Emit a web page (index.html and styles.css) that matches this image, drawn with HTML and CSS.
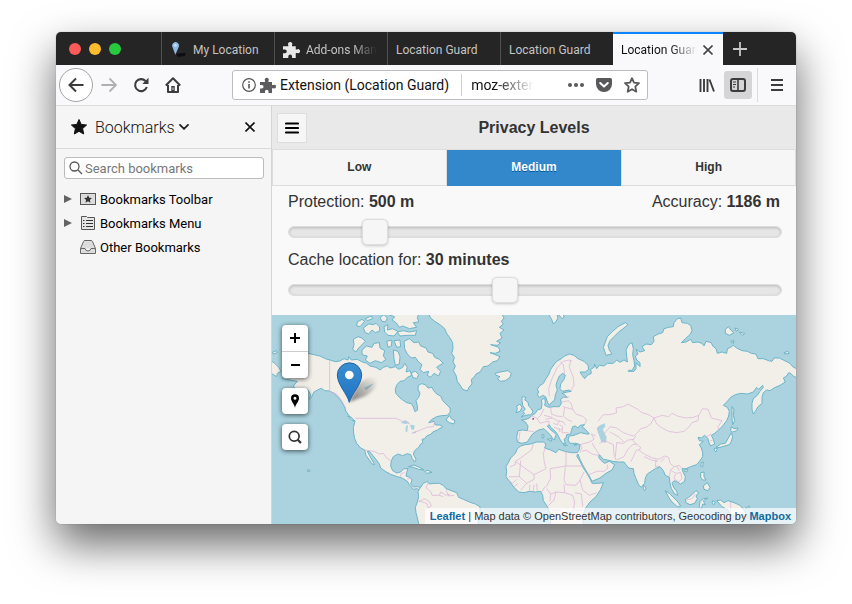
FILE: index.html
```html
<!DOCTYPE html>
<html lang="en">
<head>
    <meta charset="UTF-8">
    <meta name="viewport" content="width=device-width, initial-scale=1.0">
    <title>Location Guard</title>
    <link rel="stylesheet" href="styles.css">
</head>
<body>

<!-- shared shapes -->
<svg class="defs" width="0" height="0" aria-hidden="true">
    <symbol id="puzzle" viewBox="0 0 16 16">
        <path d="M5 5V3.800A2 2 0 1 1 8.500 3.800V5H12V8H13.200A1.900 1.900 0 1 1 13.200 11.200H12V16H8.500V14.500A1.700 1.700 0 0 0 5 14.500V16H0V11.500H1.800A1.700 1.700 0 0 0 1.800 8H0V5Z" fill="currentColor"/>
    </symbol>
    <symbol id="star" viewBox="0 0 16 16">
        <path d="M8 0.500L10.200 5.400L15.600 6L11.600 9.600L12.700 15L8 12.300L3.300 15L4.400 9.600L0.400 6L5.800 5.400Z" fill="currentColor" stroke="currentColor" stroke-linejoin="round"/>
    </symbol>
    <symbol id="magnifier" viewBox="0 0 14 14">
        <circle cx="5.500" cy="5.500" r="4.500" fill="none" stroke="currentColor" stroke-width="1.300"/>
        <path d="M9 9L13 13" stroke="currentColor" stroke-width="1.300"/>
    </symbol>
</svg>

<div class="window">

    <header class="tab-bar">
        <div class="lights">
            <span class="light red"></span>
            <span class="light yellow"></span>
            <span class="light green"></span>
        </div>
        <button class="tab">
            <svg class="tab-icon" viewBox="0 0 16 16"><path d="M6 12L15 11L14 14L7 15Z" fill="#0c0e12"/><path d="M5 13L2.500 6A3.200 3.200 0 1 1 8 6Z" fill="#8fb8e4"/><circle cx="5" cy="4" r="1.500" fill="#c3dbf3"/></svg>
            <span class="tab-label">My Location</span>
        </button>
        <button class="tab">
            <svg class="tab-icon light-icon"><use href="#puzzle"/></svg>
            <span class="tab-label fade">Add-ons Manager</span>
        </button>
        <button class="tab"><span class="tab-label">Location Guard</span></button>
        <button class="tab"><span class="tab-label">Location Guard</span></button>
        <button class="tab active">
            <span class="tab-label fade">Location Guard</span>
            <svg class="tab-close" viewBox="0 0 10 10"><path d="M0.500 0.500L9.500 9.500M9.500 0.500L0.500 9.500" stroke="#444" stroke-width="1.600"/></svg>
        </button>
        <button class="new-tab" aria-label="New tab">
            <svg width="14" height="14" viewBox="0 0 14 14"><path d="M7 0V14M0 7H14" stroke="#c8c8c8" stroke-width="1.800"/></svg>
        </button>
    </header>

    <nav class="toolbar">
        <button class="back" aria-label="Back">
            <svg width="16" height="16" viewBox="0 0 16 16"><path d="M15.500 8H1.500M8 1.500L1.500 8L8 14.500" fill="none" stroke="#3c3c3c" stroke-width="2"/></svg>
        </button>
        <button class="tool" aria-label="Forward">
            <svg width="16" height="16" viewBox="0 0 16 16"><path d="M0.500 8H14.500M8.500 1.500L15 8L8.500 14.500" fill="none" stroke="#b0b0b2" stroke-width="1.800"/></svg>
        </button>
        <button class="tool" aria-label="Reload">
            <svg width="16" height="16" viewBox="0 0 16 16"><path d="M12.500 4A6 6 0 1 0 13.800 10" fill="none" stroke="#3c3c3c" stroke-width="2.100"/><path d="M15.500 0.800V7H9.300Z" fill="#3c3c3c"/></svg>
        </button>
        <button class="tool" aria-label="Home">
            <svg width="16" height="16" viewBox="0 0 16 16"><path d="M0.800 8.500L8 1.300L15.200 8.500M3 8V15H13V8" fill="none" stroke="#3c3c3c" stroke-width="2" stroke-linejoin="round"/><path d="M6.300 15V9H9.700V15" fill="#3c3c3c"/><path d="M8 10.500V13" stroke="#ddd"/></svg>
        </button>

        <div class="url-bar">
            <button class="identity">
                <svg class="info" width="14" height="14" viewBox="0 0 14 14"><circle cx="7" cy="7" r="6.300" fill="none" stroke="#555" stroke-width="1.200"/><path d="M7 6V10.500M7 3.200V4.800" stroke="#555" stroke-width="1.600"/></svg>
                <svg class="ext" width="16" height="16"><use href="#puzzle"/></svg>
                <span>Extension (Location Guard)</span>
            </button>
            <input class="url" type="text" value="moz-exten" aria-label="Address">
            <button class="url-button" aria-label="Page actions">
                <svg width="16" height="16" viewBox="0 0 16 16" fill="#58585a"><circle cx="2" cy="8" r="2"/><circle cx="8" cy="8" r="2"/><circle cx="14" cy="8" r="2"/></svg>
            </button>
            <button class="url-button" aria-label="Save to Pocket">
                <svg width="16" height="16" viewBox="0 0 16 16"><path d="M1.500 1H14.500Q16 1 16 2.500V7A8 8 0 0 1 0 7V2.500Q0 1 1.500 1Z" fill="#58585a"/><path d="M4.200 6L8 9.600L11.800 6" fill="none" stroke="#fff" stroke-width="2" stroke-linecap="round" stroke-linejoin="round"/></svg>
            </button>
            <button class="url-button" aria-label="Bookmark this page">
                <svg width="16" height="16" viewBox="0 0 16 16"><path d="M8 1.200L10 5.700L15 6.200L11.300 9.600L12.300 14.700L8 12.200L3.700 14.700L4.700 9.600L1 6.200L6 5.700Z" fill="none" stroke="#58585a" stroke-width="1.800" stroke-linejoin="round"/></svg>
            </button>
        </div>

        <button class="tool" aria-label="Library">
            <svg width="16" height="16" viewBox="0 0 16 16"><path d="M1.500 2V15M5 2V15M8.500 2V15M10.500 2.500L15 14.500" stroke="#3c3c3c" stroke-width="1.900" fill="none"/></svg>
        </button>
        <button class="tool pressed" aria-label="Sidebars">
            <svg width="16" height="14" viewBox="0 0 16 14"><rect x="1" y="1" width="14" height="12" rx="2" fill="none" stroke="#3c3c3c" stroke-width="2"/><path d="M8 1V13" stroke="#3c3c3c" stroke-width="1.600"/><path d="M3 4H6M3 6.500H6M3 9H5" stroke="#3c3c3c"/></svg>
        </button>
        <button class="tool app-menu" aria-label="Menu">
            <svg width="12" height="12" viewBox="0 0 12 12"><path d="M0 1H12M0 6H12M0 11H12" stroke="#3c3c3c" stroke-width="1.800"/></svg>
        </button>
    </nav>

    <div class="content">

        <aside class="sidebar">
            <div class="sidebar-header">
                <button class="sidebar-title">
                    <svg width="16" height="16"><use href="#star"/></svg>
                    <span>Bookmarks</span>
                    <svg width="10" height="6" viewBox="0 0 10 6"><path d="M1 0.800L5 4.800L9 0.800" fill="none" stroke="#222" stroke-width="1.800" stroke-linecap="round"/></svg>
                </button>
                <button class="sidebar-close" aria-label="Close sidebar">
                    <svg width="10" height="10" viewBox="0 0 10 10"><path d="M0.500 0.500L9.500 9.500M9.500 0.500L0.500 9.500" stroke="#111" stroke-width="1.600"/></svg>
                </button>
            </div>
            <label class="search">
                <svg width="14" height="14"><use href="#magnifier"/></svg>
                <input type="search" placeholder="Search bookmarks" aria-label="Search bookmarks">
            </label>
            <ul class="tree">
                <li>
                    <svg class="twisty" viewBox="0 0 8 8"><path d="M0 0L8 4L0 8Z" fill="#636363"/></svg>
                    <svg class="folder" viewBox="0 0 16 14"><rect x="0.500" y="1.500" width="15" height="11" fill="#ddd" stroke="#555"/><path d="M8 3L9.200 5.700L12 6L9.900 7.900L10.500 10.700L8 9.300L5.500 10.700L6.100 7.900L4 6L6.800 5.700Z" fill="#333"/></svg>
                    <a href="#toolbar">Bookmarks Toolbar</a>
                </li>
                <li>
                    <svg class="twisty" viewBox="0 0 8 8"><path d="M0 0L8 4L0 8Z" fill="#636363"/></svg>
                    <svg class="folder" viewBox="0 0 16 14"><path d="M1.500 0.500H6.500L7.500 1.500H14.500V13.500H1.500Z" fill="#e6e6e6" stroke="#555"/><path d="M3 4.500H4.500M3 7.500H4.500M3 10.500H4.500M6 4.500H13M6 7.500H13M6 10.500H13" stroke="#333"/></svg>
                    <a href="#menu">Bookmarks Menu</a>
                </li>
                <li>
                    <span class="twisty"></span>
                    <svg class="folder" viewBox="0 0 16 14"><path d="M0.500 8.500L3.500 1.500Q3.800 0.500 5 0.500H11Q12.200 0.500 12.500 1.500L15.500 8.500V13.500H0.500Z" fill="#ddd" stroke="#666"/><path d="M0.500 8.500H5Q5.500 11 8 11Q10.500 11 11 8.500H15.500" fill="#f5f5f5" stroke="#666"/></svg>
                    <a href="#other">Other Bookmarks</a>
                </li>
            </ul>
        </aside>

        <main class="page">
            <div class="page-header">
                <button class="page-menu" aria-label="Open menu">
                    <svg width="14" height="12" viewBox="0 0 14 12"><path d="M1 1.500H13M1 6H13M1 10.500H13" stroke="#000" stroke-width="2.200" stroke-linecap="round"/></svg>
                </button>
                <h1>Privacy Levels</h1>
            </div>

            <div class="levels">
                <button>Low</button>
                <button class="selected">Medium</button>
                <button>High</button>
            </div>

            <div class="settings">
                <div class="setting-row">
                    <label for="protection">Protection: <b>500 m</b></label>
                    <span>Accuracy: <b>1186 m</b></span>
                </div>
                <input id="protection" type="range" min="0" max="1000" value="156">
                <div class="setting-row">
                    <label for="cache">Cache location for: <b>30 minutes</b></label>
                </div>
                <input id="cache" type="range" min="0" max="1000" value="435">
            </div>

            <div class="map">
                <svg class="world" viewBox="6 15 1572 627" preserveAspectRatio="xMinYMin slice" aria-hidden="true">
                    <defs>
                        <linearGradient id="pin" x1="0" y1="0" x2="0" y2="1">
                            <stop offset="0" stop-color="#3a8fd2"/>
                            <stop offset="1" stop-color="#2072c0"/>
                        </linearGradient>
                        <linearGradient id="pin-shadow" x1="0" y1="1" x2="1" y2="0">
                            <stop offset="0" stop-color="#000" stop-opacity="0.500"/>
                            <stop offset="1" stop-color="#000" stop-opacity="0"/>
                        </linearGradient>
                        <filter id="soft"><feGaussianBlur stdDeviation="5"/></filter>
                    </defs>

                    <g class="land">
                        <!-- North and Central America -->
                        <path d="M60 130L85 120L114 130L132 134L150 138L166 146L180 150L196 155L210 153L222 146L234 150L236 140L244 150L262 148L275 155L290 160L300 168L318 172L330 180L340 172L352 168L360 174L376 170L386 178L398 172L404 160L412 172L408 186L420 182L425 196L412 202L402 212L390 214L381 224L376 236L377 249L388 262L398 270L410 278L424 281L430 291L435 305L443 300L442 288L438 272L446 262L450 250L444 238L445 226L455 221L466 224L474 234L486 232L490 240L500 252L512 258L518 272L528 282L540 294L541 306L532 316L515 317L500 320L486 328L476 338L492 334L496 345L510 345L518 350L502 360L488 366L484 372L470 378L464 386L456 388L459 398L452 402L446 412L434 422L430 432L438 448L434 456L427 446L422 434L412 431L398 437L384 432L370 440L364 452L362 468L368 482L380 489L392 486L400 477L414 475L410 488L408 498L420 502L426 510L422 522L430 531L442 530L452 532L452 540L440 536L430 538L418 524L412 514L398 505L382 500L362 493L346 484L332 474L328 462L318 448L308 436L298 424L292 424L298 436L306 450L314 464L306 462L298 450L288 436L284 420L272 414L260 400L254 386L251 370L250 352L254 338L248 326L236 316L228 304L222 288L214 274L206 264L192 250L178 243L164 242L154 235L142 240L132 246L124 262L118 268L122 254L114 240L96 236L76 238L70 228L82 214L60 210L36 206L50 190L36 172Z"/>
                        <!-- Chukotka at the date line -->
                        <path d="M0 150L14 160L26 172L34 184L22 190L20 200L0 188Z"/>
                        <path d="M8 126L20 122L22 128L10 132Z"/>
                        <!-- Vancouver, Newfoundland, Antilles, Hawaii -->
                        <path d="M233 318L242 322L256 334L244 330Z"/>
                        <path d="M528 330L538 316L544 326L555 332L552 342L538 338Z"/>
                        <path d="M416 470L432 465L448 472L462 480L446 478L430 472Z"/>
                        <path d="M464 484L474 481L486 487L470 490Z"/>
                        <path d="M112 480L120 480L119 485L113 484Z"/>
                        <!-- Arctic archipelago -->
                        <path d="M250 88L264 80L276 84L286 94L276 104L266 114L258 126L248 118L252 104Z"/>
                        <path d="M276 120L290 108L306 112L312 100L328 98L330 114L344 122L340 138L348 148L334 158L316 152L300 160L286 150L292 138L276 134Z"/>
                        <path d="M350 94L366 90L364 108L354 112Z"/>
                        <path d="M370 120L384 124L390 140L388 162L376 166L372 146Z"/>
                        <path d="M372 92L390 90L392 110L380 112Z"/>
                        <path d="M402 94L418 86L432 98L446 96L452 108L468 114L474 126L488 130L494 142L508 148L520 160L508 166L500 172L512 184L506 198L492 190L482 202L472 196L476 184L460 188L450 178L456 164L444 154L436 142L424 144L412 132L404 116Z"/>
                        <path d="M424 188L436 184L446 194L440 206L428 202Z"/>
                        <path d="M280 54L296 42L310 44L318 40L328 50L330 62L316 68L306 60L296 72L286 68Z"/>
                        <path d="M262 36L276 28L284 34L270 50L260 48Z"/>
                        <path d="M286 26L304 18L308 26L292 32Z"/>
                        <path d="M342 50L354 44L352 60L368 56L384 64L372 78L354 76L344 66Z"/>
                        <path d="M382 66L400 62L418 66L440 62L436 76L412 76L390 78Z"/>
                        <path d="M330 22L342 14L352 24L346 36L336 34Z"/>
                        <path d="M364 0H452L442 22L446 36L430 38L440 52L418 56L398 48L388 52L378 38L366 30L374 20L360 16Z"/>
                        <!-- Greenland -->
                        <path d="M470 0L482 24L494 34L510 44L524 56L530 70L540 84L548 98L549 116L545 130L553 142L549 156L556 168L550 182L558 196L562 214L572 228L578 238L592 243L598 230L606 222L604 208L612 202L618 192L630 186L640 170L654 168L668 156L682 152L690 140L676 134L660 128L676 130L690 124L686 112L662 104L682 106L692 98L680 94L696 84L690 70L702 60L688 52L700 42L694 34L702 24L690 0Z"/>
                        <!-- Iceland, British Isles -->
                        <path d="M676 190L690 186L702 184L714 182L724 190L720 202L706 212L692 214L682 206L690 200L678 196Z"/>
                        <path d="M756 260L768 262L764 270L774 276L776 288L784 296L789 306L782 314L766 316L754 321L764 310L758 304L766 298L758 286L756 272Z"/>
                        <path d="M740 288L750 282L756 292L750 304L738 308L742 298Z"/>
                        <!-- Svalbard, Novaya Zemlya, Severnaya Zemlya -->
                        <path d="M836 14L844 26L850 42L858 34L864 24L860 10Z"/>
                        <path d="M866 14L876 26L882 22L880 10Z"/>
                        <path d="M1000 112L1006 96L1012 80L1028 64L1044 50L1066 38L1074 44L1062 54L1046 66L1032 80L1020 92L1014 106L1018 120L1026 132L1008 136Z"/>
                        <path d="M1366 58L1376 50L1382 60L1392 68L1378 76L1366 70Z"/>
                        <path d="M1394 54L1406 58L1400 64ZM1408 66L1424 70L1418 76ZM1382 94L1392 92L1390 100Z"/>
                        <path d="M1542 128L1554 124L1558 130L1544 132Z"/>
                        <!-- Europe, Asia and Africa -->
                        <path d="M802 238L808 228L820 220L828 206L836 194L842 178L852 164L860 154L874 146L884 138L898 132L912 136L924 146L942 154L954 166L956 178L946 186L930 186L936 196L944 206L952 196L964 190L962 178L972 172L974 162L980 176L988 166L1002 168L1012 160L1030 160L1040 150L1050 157L1062 150L1072 156L1070 138L1068 120L1076 104L1086 98L1090 116L1088 134L1092 152L1094 168L1086 182L1078 180L1074 184L1092 184L1098 176L1098 158L1110 170L1110 158L1100 150L1096 138L1104 132L1098 118L1110 126L1124 122L1116 110L1128 102L1144 104L1152 94L1150 80L1164 72L1178 68L1182 56L1196 52L1210 50L1212 38L1222 26L1232 24L1236 38L1252 40L1262 46L1266 62L1260 74L1246 86L1234 98L1248 96L1262 88L1268 98L1284 96L1296 100L1302 108L1308 94L1324 98L1328 108L1338 116L1342 130L1356 126L1370 130L1372 116L1382 112L1390 106L1400 114L1416 122L1432 124L1444 130L1458 132L1464 146L1480 146L1496 152L1506 154L1512 144L1528 144L1548 154L1560 160L1568 170L1590 182V206L1572 200L1564 192L1556 188L1550 198L1540 204L1546 216L1530 226L1512 234L1500 242L1490 240L1480 248L1476 262L1476 280L1464 290L1456 304L1450 312L1446 298L1446 280L1450 266L1462 256L1470 244L1480 232L1478 226L1466 238L1460 232L1450 246L1432 252L1412 250L1396 254L1382 262L1372 274L1360 286L1372 292L1378 304L1376 318L1370 332L1358 348L1346 360L1334 370L1324 376L1330 388L1334 402L1322 408L1316 396L1314 386L1304 376L1294 384L1284 382L1288 392L1300 394L1288 404L1294 414L1298 428L1298 440L1290 452L1280 464L1262 470L1248 476L1236 476L1240 488L1246 500L1244 514L1232 522L1222 516L1212 512L1206 520L1212 534L1220 544L1223 556L1214 552L1204 536L1200 520L1198 502L1186 496L1180 482L1170 470L1156 476L1144 484L1132 492L1126 504L1124 520L1114 532L1106 524L1098 506L1092 490L1090 476L1076 474L1068 464L1062 456L1046 456L1028 454L1012 450L1000 448L988 434L986 442L994 452L1004 460L1018 454L1034 464L1026 480L1008 490L990 504L966 514L958 498L948 482L938 464L930 448L924 432L920 438L930 454L940 474L952 492L962 510L966 520L984 520L1000 518L992 538L978 560L960 576L948 592L938 620L942 670H850L842 640L840 610L832 590L820 572L818 556L812 544L796 546L778 544L762 548L746 546L732 532L720 516L708 500L710 484L708 470L716 456L722 444L736 430L742 416L752 408L766 404L782 402L800 396L820 396L828 402L824 414L842 420L858 428L866 418L884 424L904 428L922 428L928 418L930 404L918 400L900 400L894 390L898 378L912 376L932 368L950 372L958 372L946 358L936 350L944 344L930 346L924 354L916 348L908 350L904 362L902 372L890 374L888 384L882 388L886 400L878 400L870 388L864 376L856 364L842 352L838 344L832 348L840 358L850 366L860 374L856 378L854 390L848 386L842 376L832 366L822 356L806 360L796 366L786 374L778 386L772 396L756 400L742 396L740 382L744 362L758 360L772 362L774 348L766 336L754 330L768 328L778 324L786 316L796 310L802 300L814 296L816 282L814 270L824 264L826 276L824 286L836 292L852 290L868 290L874 280L872 268L880 262L892 262L884 254L876 250L892 246L904 244L896 240L878 244L870 236L872 222L882 208L886 196L878 190L868 198L862 212L858 226L862 240L856 254L854 270L844 278L838 286L832 276L828 262L820 256L808 262L802 254L806 246Z"/>
                        <!-- Mediterranean islands -->
                        <path d="M832 388L846 386L844 394ZM816 374L822 374L821 384L816 384ZM880 404L892 406L884 408ZM912 404L922 402L916 408Z"/>
                        <!-- Sakhalin and Japan -->
                        <path d="M1386 290L1392 300L1390 316L1394 332L1388 344L1386 326Z"/>
                        <path d="M1384 350L1392 356L1404 354L1400 362L1388 366L1382 362Z"/>
                        <path d="M1384 368L1388 380L1384 394L1378 404L1364 408L1350 412L1338 412L1352 402L1366 400L1374 386Z"/>
                        <path d="M1334 414L1342 416L1338 426L1332 420Z"/>
                        <!-- South-east Asia -->
                        <path d="M1294 458L1300 456L1298 470L1292 468ZM1246 478L1254 478L1250 486L1244 484ZM1120 524L1128 534L1124 542L1120 536Z"/>
                        <path d="M1292 488L1302 486L1302 500L1308 510L1298 510L1292 502ZM1300 528L1312 518L1320 532L1314 542L1302 538Z"/>
                        <path d="M1186 542L1198 550L1212 564L1224 576L1232 588L1222 590L1206 576L1196 562Z"/>
                        <path d="M1246 568L1256 562L1268 552L1278 542L1286 548L1278 558L1282 566L1274 580L1260 584L1248 578Z"/>
                        <path d="M1290 574L1300 566L1314 564L1300 572L1306 584L1298 582L1294 598L1288 590Z"/>
                        <path d="M1328 572L1336 576L1332 584L1326 580ZM1224 596L1250 598L1262 604L1240 604Z"/>
                        <path d="M1340 572L1352 570L1362 578L1374 572L1392 578L1410 586L1422 600L1436 622L1416 616L1398 620L1380 612L1374 600L1356 590Z"/>
                        <path d="M1426 594L1438 588L1436 596Z"/>
                        <!-- South America -->
                        <path d="M452 532L460 520L472 514L478 522L492 520L508 520L520 526L528 536L544 542L560 548L566 562L580 568L598 576L616 582L630 590L630 610L620 660H452L446 640L438 608L436 592L442 576L446 560L444 544Z"/>
                    </g>

                    <!-- lakes -->
                    <g class="lake">
                        <path d="M990 346L1004 340L1006 350L998 358L1004 370L1010 382L1008 398L994 396L990 384L984 368L980 354Z"/>
                        <path d="M392 338L406 330L418 338L406 342ZM408 348L414 344L412 366L406 364ZM420 344L434 346L432 360L424 358ZM424 370L440 362L436 370Z"/>
                        <path d="M282 234L300 224L312 220L300 232L288 240Z"/>
                    </g>

                    <!-- borders -->
                    <g class="borders">
                        <path d="M179 150V244L200 252L214 270L228 296M256 325H378L394 332L420 342M426 370L452 360L470 352L490 350L494 336M284 420L312 424L328 432L340 430L350 444L362 452M390 502L394 490L404 488M412 508L424 504"/>
                        <path d="M474 518L468 534L482 544L486 556L508 556L512 546L528 556L540 552M508 556L520 560M446 576L462 566L478 574L484 588L466 600M528 540L536 558L552 556M446 572L470 580L476 596"/>
                        <path d="M838 258L836 236L846 206L862 172L880 154L898 150L906 154M884 192L880 164L870 154M902 150L898 172L910 202L912 226L902 242"/>
                        <path d="M822 296L812 316L802 326L810 340L822 336L838 334L836 342M782 316L802 326M846 322L822 316M826 328L848 324L862 332L880 336L886 346M842 292L844 312L860 318L878 320M884 292L880 318L894 330L906 334M878 290L908 298L918 312L940 320L950 330L944 342M876 276L896 272L904 282L908 298M880 262L898 260M850 340L862 344L868 332M852 352L866 356L870 366M868 344L878 350L876 368L896 368M866 356L876 360M772 362L794 366M750 364L746 396"/>
                        <path d="M790 402L784 420L752 444L736 454L736 464L720 470M736 454L792 494L828 476L822 452L820 430L826 414M888 424V468H940M888 468L840 476L842 504L830 528L822 534M752 452L748 500L716 500M748 500L770 520L792 508V494M770 520L752 540M780 524L778 544M792 524L790 544M800 520L802 544M886 470L882 510L888 524L918 526L930 510L942 486M822 534L816 546M830 536L842 552L858 546L884 548L882 524M858 546L852 570L832 590M884 548L908 556L914 576L910 600M930 510L938 540L958 556L980 548M914 548L934 552L938 590M842 552L840 574M846 600L870 602L884 620L906 610L910 600L940 600M716 512L728 520L740 508M730 532L744 520"/>
                        <path d="M930 428L936 412L930 404L958 396L972 388L964 372L978 378M936 424L948 420L966 432L986 436M966 398L976 416L988 434M950 496L982 484L1002 484M1002 484L1014 474L1012 464M988 400L1004 392L1030 404L1032 434L1038 450"/>
                        <path d="M984 334L1000 314L1020 314L1040 308L1038 294L1060 290L1074 282L1100 296L1116 308L1136 314L1152 324L1142 342L1128 352L1112 356L1104 366L1092 378L1076 374L1060 368L1040 354L1020 350L1004 370M1152 324L1176 316L1196 320L1206 310L1222 318L1248 324L1270 322L1286 316L1284 332L1266 338L1256 352L1242 364L1220 368L1196 364L1176 354L1160 342ZM1286 316L1298 296L1314 298L1324 324L1356 332L1344 350L1346 360M1310 380L1324 372M1318 394L1328 390M1040 450L1062 440L1072 420L1088 404L1100 402M1038 398L1060 400L1074 390L1092 388M1040 400L1036 440M1020 366L1048 382L1062 396M1098 378L1088 390L1096 400L1112 412L1108 422L1126 434L1148 444L1166 448L1184 438L1196 442L1200 460L1212 470L1228 466L1236 476M1082 456L1090 440L1098 422L1108 418M1122 440L1144 450L1164 454M1158 450L1156 470L1168 468M1172 456L1184 444M1198 500L1202 480L1212 470M1204 482L1218 490L1232 488L1236 506L1226 516L1212 506L1216 492M1220 468L1228 482M1250 570L1266 566L1276 552M1382 576V612"/>
                    </g>
                    <rect x="787" y="324" width="5" height="5" fill="#b04b8a"/>

                    <!-- location marker -->
                    <path d="M238 276L262 226Q290 196 318 206Q326 234 286 258Z" fill="url(#pin-shadow)" filter="url(#soft)"/>
                    <path d="M238 277C232 252 202 224 202 195A36.500 36.500 0 0 1 275 195C275 224 244 252 238 277Z" fill="url(#pin)" stroke="#2262a3" stroke-width="3"/>
                    <circle cx="238" cy="195" r="13" fill="#fff"/>
                </svg>

                <div class="map-controls">
                    <div class="control-group">
                        <button aria-label="Zoom in"><svg width="12" height="12" viewBox="0 0 12 12"><path d="M6 1V11M1 6H11" stroke="#000" stroke-width="2"/></svg></button>
                        <button aria-label="Zoom out"><svg width="12" height="12" viewBox="0 0 12 12"><path d="M2 6H11" stroke="#000" stroke-width="2"/></svg></button>
                    </div>
                    <div class="control-group">
                        <button aria-label="Go to my location"><svg width="10" height="14" viewBox="0 0 10 14"><path d="M5 14C4.500 10 1 7.500 1 4.200A4 4 0 0 1 9 4.200C9 7.500 5.500 10 5 14ZM5 2.700A1.500 1.500 0 1 0 5 5.700A1.500 1.500 0 1 0 5 2.700Z" fill="#000" fill-rule="evenodd"/></svg></button>
                    </div>
                    <div class="control-group">
                        <button aria-label="Search the map"><svg width="14" height="14" viewBox="0 0 14 14"><circle cx="6.200" cy="6.200" r="4.900" fill="none" stroke="#333" stroke-width="1.700"/><path d="M9.500 9.500L13 13" stroke="#333" stroke-width="2.200"/></svg></button>
                    </div>
                </div>

                <div class="attribution"><a href="#leaflet">Leaflet</a> | Map data © OpenStreetMap contributors, Geocoding by <a href="#mapbox">Mapbox</a></div>
            </div>
        </main>

    </div>
</div>

</body>
</html>
```
FILE: styles.css
```css
* {
    box-sizing: border-box;
}

body {
    margin: 0;
    min-height: 100vh;
    padding: 32px 56px 80px;
    display: flex;
    background: #fff;
    font-family: Roboto, "Liberation Sans", sans-serif;
    font-size: 13px;
    color: #111;
}

button {
    margin: 0;
    padding: 0;
    border: none;
    background: none;
    font: inherit;
    color: inherit;
    display: flex;
    align-items: center;
    justify-content: center;
}

svg {
    display: block;
    flex: none;
}

.defs {
    position: absolute;
}

.window {
    flex: 1;
    min-width: 0;
    display: flex;
    flex-direction: column;
    border-radius: 5px;
    overflow: hidden;
    background: #f9f9fb;
    box-shadow: 0 0 1px rgba(0, 0, 0, 0.5), 0 20px 44px rgba(0, 0, 0, 0.6);
}

/* --- tabs --- */
.tab-bar {
    display: flex;
    height: 33px;
    background: #252525;
    color: #c4c4c4;
}

.lights {
    width: 105px;
    padding-left: 13px;
    display: flex;
    align-items: center;
    gap: 8px;
}

.light {
    width: 12px;
    height: 12px;
    border-radius: 50%;
}

.red { background: #fc5b57; }
.yellow { background: #fdbc2e; }
.green { background: #27c93f; }

.tab {
    flex: 0 1 113px;
    min-width: 0;
    padding: 2px 10px 0 8px;
    gap: 6px;
    justify-content: flex-start;
    border-left: 1px solid #505050;
    font-size: 12px;
}

.tab-icon {
    width: 17px;
    height: 17px;
}

.light-icon {
    color: #e8e8e8;
}

.tab-label {
    flex: 1;
    min-width: 0;
    overflow: hidden;
    white-space: nowrap;
    text-align: left;
}

.fade {
    -webkit-mask-image: linear-gradient(to right, #000 65%, transparent);
    mask-image: linear-gradient(to right, #000 65%, transparent);
}

.tab.active {
    flex-basis: 110px;
    padding-top: 0;
    border-left: none;
    border-top: 2px solid #0a84ff;
    background: #f9f9fb;
    color: #111;
}

.tab-close {
    width: 10px;
    height: 10px;
}

.new-tab {
    width: 34px;
}

/* --- toolbar --- */
.toolbar {
    display: flex;
    align-items: center;
    height: 41px;
    padding: 0 1px 0 3px;
    background: #f9f9fb;
    border-bottom: 1px solid #dcdcdc;
}

.back {
    width: 34px;
    height: 34px;
    border: 1px solid #a5a5a5;
    border-radius: 50%;
    background: #fff;
}

.tool {
    width: 32px;
    height: 28px;
}

.pressed {
    width: 28px;
    margin: 0 5px 0 1px;
    border-radius: 3px;
    background: #d5d5d7;
}

.app-menu {
    width: 38px;
    height: 34px;
    border-left: 1px solid #dcdcdc;
}

.url-bar {
    flex: 1;
    min-width: 0;
    height: 30px;
    margin: 0 43px;
    padding: 0 1px 0 9px;
    display: flex;
    align-items: center;
    border: 1px solid #bdbdbf;
    border-radius: 3px;
    background: #fff;
}

.identity {
    height: 22px;
    padding-right: 12px;
    gap: 4px;
    border-right: 1px solid #d0d0d0;
    font-size: 14px;
    white-space: nowrap;
}

.ext {
    color: #5c5c5e;
}

.url {
    flex: 1;
    min-width: 0;
    margin-right: 28px;
    padding: 0 0 0 9px;
    border: none;
    background: none;
    font: inherit;
    font-size: 14px;
    color: #111;
    -webkit-mask-image: linear-gradient(to right, #000 45%, transparent 100%);
    mask-image: linear-gradient(to right, #000 45%, transparent 100%);
}

.url-button {
    width: 28px;
    height: 28px;
}

/* --- sidebar --- */
.content {
    flex: 1;
    display: flex;
    min-height: 0;
}

.sidebar {
    width: 216px;
    flex: none;
    background: #f5f5f5;
    border-right: 1px solid #d4d4d4;
}

.sidebar-header {
    display: flex;
    align-items: center;
    justify-content: space-between;
    height: 43px;
    padding: 0 16px 0 15px;
    border-bottom: 1px solid #d9d9d9;
}

.sidebar-title {
    gap: 8px;
    font-size: 16px;
    font-weight: 300;
    color: #111;
}

.sidebar-title svg:last-child {
    margin-left: -4px;
}

.search {
    display: flex;
    align-items: center;
    gap: 2px;
    height: 22px;
    margin: 8px 7px 0 8px;
    padding: 0 4px;
    border: 1px solid #bcbcbc;
    border-radius: 3px;
    background: #fff;
    color: #555;
}

.search input {
    flex: 1;
    min-width: 0;
    padding: 0;
    border: none;
    outline: none;
    background: none;
    font: inherit;
}

.search input::placeholder {
    color: #777;
}

.tree {
    list-style: none;
    margin: 8px 0 0;
    padding: 0 0 0 8px;
}

.tree li {
    display: flex;
    align-items: center;
    height: 24px;
}

.tree a {
    color: #000;
    text-decoration: none;
}

.twisty {
    width: 8px;
    height: 8px;
    margin-right: 8px;
}

.folder {
    width: 16px;
    height: 14px;
    margin-right: 4px;
}

/* --- Location Guard page --- */
.page {
    flex: 1;
    min-width: 0;
    display: flex;
    flex-direction: column;
    background: #f9f9f9;
    font-family: "Liberation Sans", Arial, sans-serif;
    font-size: 16px;
    color: #333;
}

.page-header {
    display: grid;
    grid-template-columns: 30px 1fr 30px;
    align-items: center;
    height: 44px;
    padding: 0 5px;
    background: #e9e9e9;
    border-bottom: 1px solid #ddd;
}

.page-header h1 {
    margin: 0;
    font-size: 16px;
    text-align: center;
}

.page-menu {
    height: 30px;
    border: 1px solid #ddd;
    background: #f6f6f6;
}

.levels {
    display: grid;
    grid-template-columns: repeat(3, 1fr);
    height: 36px;
    font-size: 12px;
    font-weight: bold;
}

.levels button {
    padding-bottom: 2px;
    background: #f6f6f6;
    border: 1px solid #ddd;
    border-top: none;
}

.levels .selected {
    background: #38c;
    border-color: #38c;
    color: #fff;
    text-shadow: 0 1px 0 #059;
}

.settings {
    padding: 6px 14px 7px 16px;
}

.setting-row {
    display: flex;
    justify-content: space-between;
    padding-right: 2px;
    line-height: 20px;
}

input[type="range"] {
    -webkit-appearance: none;
    appearance: none;
    display: block;
    width: 100%;
    height: 28px;
    margin: 6px 0 4px;
    background: none;
}

input[type="range"]::-webkit-slider-runnable-track {
    height: 12px;
    border: 1px solid #ddd;
    border-radius: 6px;
    background: #e6e6e6;
    box-shadow: inset 0 1px 3px rgba(0, 0, 0, 0.2);
}

input[type="range"]::-webkit-slider-thumb {
    -webkit-appearance: none;
    appearance: none;
    width: 26px;
    height: 26px;
    margin-top: -8px;
    border: 1px solid #ddd;
    border-radius: 5px;
    background: #f6f6f6;
    box-shadow: 0 1px 3px rgba(0, 0, 0, 0.2);
}

/* --- map --- */
.map {
    position: relative;
    flex: 1;
    min-height: 200px;
    overflow: hidden;
    background: #aad3df;
}

.world {
    position: absolute;
    inset: 0;
    width: 100%;
    height: 100%;
}

.land path {
    fill: #f2efe9;
    stroke: #6db5c9;
    stroke-width: 3;
    stroke-linejoin: round;
}

.lake path {
    fill: #aad3df;
}

.borders path {
    fill: none;
    stroke: #d9aed6;
    stroke-width: 2;
    stroke-linejoin: round;
}

.map-controls {
    position: absolute;
    top: 10px;
    left: 10px;
    display: flex;
    flex-direction: column;
    gap: 10px;
}

.control-group {
    border-radius: 4px;
    background: #fff;
    box-shadow: 0 1px 5px rgba(0, 0, 0, 0.65);
}

.control-group button {
    width: 26px;
    height: 26px;
}

.control-group button + button {
    height: 27px;
    border-top: 1px solid #ccc;
}

.attribution {
    position: absolute;
    right: 0;
    bottom: 0;
    padding: 0 5px;
    background: rgba(255, 255, 255, 0.7);
    font-size: 11px;
    line-height: 16px;
    white-space: nowrap;
}

.attribution a {
    color: #0f6ca0;
    font-weight: bold;
    text-decoration: none;
}
```
